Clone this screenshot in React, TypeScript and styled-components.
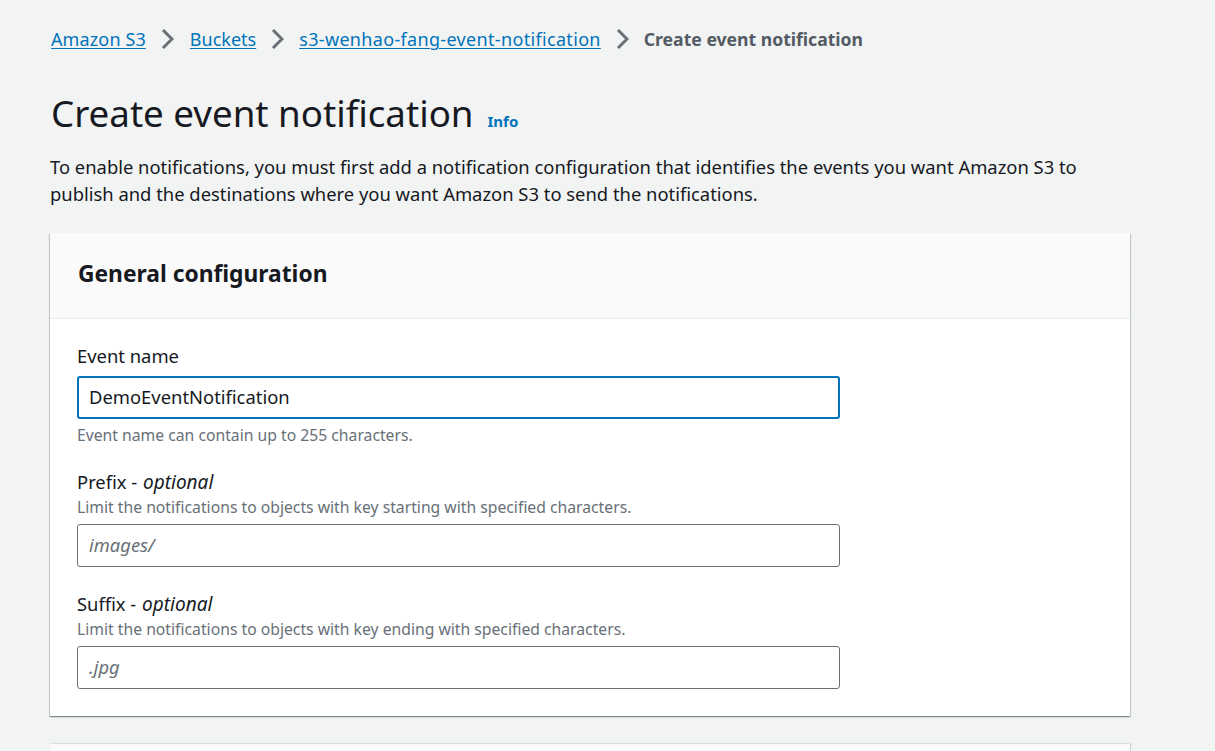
import React from 'react';
import styled, { createGlobalStyle } from 'styled-components';

const GlobalStyle = createGlobalStyle`
  html, body {
    margin: 0;
    padding: 0;
    height: 100%;
    overflow: hidden;
    background: #f2f3f3;
  }
  body {
    font-family: "Noto Sans", "Open Sans", sans-serif;
    color: #16191f;
  }
`;

const Page = styled.div`
  width: 1080px;
  padding: 24px 0 0 50px;
`;

const Breadcrumbs = styled.nav`
  display: flex;
  align-items: center;
  height: 30px;
  font-size: 18px;
  padding-left: 1px;
`;

const Crumb = styled.a<{ $spacing?: number }>`
  color: #0073bb;
  text-decoration: underline;
  text-underline-offset: 2px;
  text-decoration-thickness: 1px;
  letter-spacing: ${(p) => p.$spacing ?? 0}px;
`;

const CurrentCrumb = styled.span`
  color: #545b64;
  font-size: 17.6px;
  font-weight: 700;
`;

const Chevron = styled.svg<{ $wide?: boolean }>`
  width: 13px;
  height: 22px;
  margin: 0 ${(p) => (p.$wide ? 16 : 15)}px 0 15px;
  fill: none;
  stroke: #687078;
  stroke-width: 3;
`;

const TitleRow = styled.div`
  display: flex;
  align-items: baseline;
  margin-top: 34px;
  padding-left: 1px;
`;

const Title = styled.h1`
  margin: 0;
  font-size: 36.7px;
  line-height: 50px;
  font-weight: 400;
`;

const InfoLink = styled.a`
  margin-left: 14px;
  font-size: 15px;
  font-weight: 700;
  color: #0073bb;
`;

const Intro = styled.p`
  margin: 15px 0 0;
  font-size: 18.4px;
  line-height: 27px;
  width: 1060px;
`;

const Card = styled.section`
  margin-top: 26px;
  background: #fff;
  box-shadow: 0 1px 1px 0 rgba(0, 28, 36, 0.3), 1px 1px 1px 0 rgba(0, 28, 36, 0.15),
    -1px 1px 1px 0 rgba(0, 28, 36, 0.15);
`;

const CardHeader = styled.header`
  box-sizing: content-box;
  height: 81px;
  padding: 0 27px 4px 28px;
  display: flex;
  align-items: center;
  background: #fafafa;
  border-bottom: 1px solid #eaeded;
`;

const CardTitle = styled.h2`
  margin: 0;
  font-size: 22.8px;
  font-weight: 700;
`;

const CardBody = styled.div`
  padding: 24px 27px 27px;
  display: flex;
  flex-direction: column;
  gap: 24px;
`;

const Field = styled.div`
  display: flex;
  flex-direction: column;
`;

const Label = styled.label`
  font-size: 18.4px;
  line-height: 25px;
  margin-bottom: 2px;

  em {
    margin-left: 1px;
    font-size: 19px;
    font-style: italic;
  }
`;

const Hint = styled.div<{ $compact?: boolean }>`
  font-size: 15.72px;
  line-height: ${(p) => (p.$compact ? 20 : 21)}px;
  color: #687078;
`;

const Input = styled.input<{ $focused?: boolean }>`
  box-sizing: border-box;
  width: 763px;
  height: 43px;
  margin: ${(p) => (p.$focused ? '6px 0 6px' : '6px 0 0')};
  padding: ${(p) => (p.$focused ? '0 10px 2px' : '0 11px 2px')};
  border-radius: 3px;
  border: ${(p) => (p.$focused ? '2px solid #0073bb' : '1px solid #687078')};
  outline: none;
  background: #fff;
  font-family: inherit;
  font-size: 18.4px;
  color: #16191f;

  &::placeholder {
    color: #687078;
    font-style: italic;
    opacity: 1;
  }
`;

const NextCard = styled.section`
  margin-top: 28px;
  height: 7px;
  background: #fafafa;
  box-shadow: 1px 0 1px 0 rgba(0, 28, 36, 0.15), 0 -1px 1px 0 rgba(0, 28, 36, 0.06);
`;

const ChevronIcon = ({ wide }: { wide?: boolean }) => (
  <Chevron viewBox="0 0 13 22" $wide={wide}>
    <path d="M2 2l9 9-9 9" />
  </Chevron>
);

export default function App() {
  return (
    <>
      <GlobalStyle />
      <Page>
        <Breadcrumbs>
          <Crumb $spacing={0.12}>Amazon S3</Crumb>
          <ChevronIcon wide />
          <Crumb>Buckets</Crumb>
          <ChevronIcon />
          <Crumb $spacing={0.33}>s3-wenhao-fang-event-notification</Crumb>
          <ChevronIcon />
          <CurrentCrumb>Create event notification</CurrentCrumb>
        </Breadcrumbs>
        <TitleRow>
          <Title>Create event notification</Title>
          <InfoLink>Info</InfoLink>
        </TitleRow>
        <Intro>
          To enable notifications, you must first add a notification configuration that identifies the events you want Amazon S3 to publish and the destinations where you want Amazon S3 to send the notifications.
        </Intro>
        <Card>
          <CardHeader>
            <CardTitle>General configuration</CardTitle>
          </CardHeader>
          <CardBody>
            <Field>
              <Label>Event name</Label>
              <Input $focused defaultValue="DemoEventNotification" />
              <Hint $compact>Event name can contain up to 255 characters.</Hint>
            </Field>
            <Field>
              <Label>Prefix - <em>optional</em></Label>
              <Hint>Limit the notifications to objects with key starting with specified characters.</Hint>
              <Input placeholder="images/" />
            </Field>
            <Field>
              <Label>Suffix - <em>optional</em></Label>
              <Hint>Limit the notifications to objects with key ending with specified characters.</Hint>
              <Input placeholder=".jpg" />
            </Field>
          </CardBody>
        </Card>
        <NextCard />
      </Page>
    </>
  );
}
